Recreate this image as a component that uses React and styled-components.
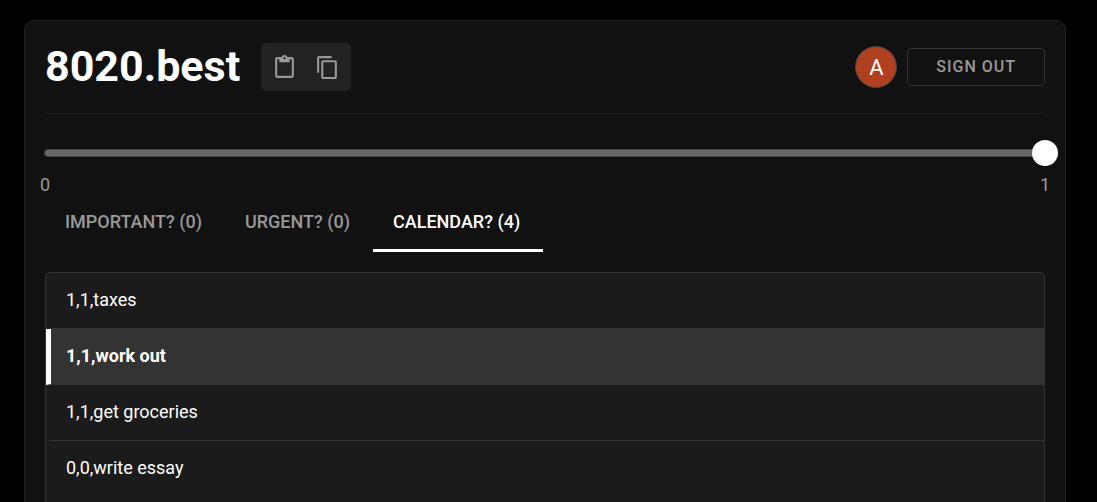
import React, { useState } from "react";
import styled, { createGlobalStyle } from "styled-components";
import { MdContentPaste, MdContentCopy } from "react-icons/md";

const GlobalStyle = createGlobalStyle`
  * { box-sizing: border-box; }
  html { background: #000; scrollbar-width: none; }
  body {
    margin: 0;
    color: #fff;
    font-family: Roboto, "Liberation Sans", sans-serif;
    font-size: 18px;
  }
  button { font-family: inherit; cursor: pointer; }
`;

const Page = styled.div`
  padding: 20px 31px 20px 24px;
`;

const Card = styled.main`
  padding: 20px;
  background: #111;
  border: 1px solid #222;
  border-radius: 10px;
`;

const Header = styled.header`
  display: flex;
  align-items: center;
  padding-bottom: 20px;
  border-bottom: 1px solid #222;
`;

const Title = styled.h1`
  margin: 0;
  padding-bottom: 2px;
  font-size: 43px;
  font-weight: 700;
  line-height: 50px;
`;

const IconGroup = styled.div`
  display: flex;
  margin-left: 21px;
  padding: 0 2px;
  background: #222;
  border-radius: 5px;
`;

const IconButton = styled.button`
  display: flex;
  align-items: center;
  justify-content: center;
  width: 43px;
  height: 48px;
  padding: 0;
  border: 0;
  background: none;
  color: #999;
  font-size: 25px;
`;

const Account = styled.div`
  display: flex;
  align-items: center;
  gap: 10px;
  margin-left: auto;
`;

const Avatar = styled.div`
  display: flex;
  align-items: center;
  justify-content: center;
  width: 42px;
  height: 42px;
  border: 1px solid #444;
  border-radius: 50%;
  background: #b14020;
  font-size: 22px;
`;

const SignOutButton = styled.button`
  height: 38px;
  padding: 0 28px 2px;
  border: 1px solid #333;
  border-radius: 5px;
  background: none;
  color: #999;
  font-size: 16px;
  font-weight: 500;
  letter-spacing: 1px;
`;

const SliderArea = styled.div`
  display: grid;
  align-items: center;
  margin-top: 26px;
  & > * { grid-area: 1 / 1; }
`;

const Rail = styled.div`
  height: 8px;
  margin: 0 -1px;
  border: 1px solid #444;
  border-radius: 4px;
  background: #666;
`;

const Range = styled.input`
  appearance: none;
  height: 26px;
  margin: 0 -13px;
  background: none;
  &::-webkit-slider-thumb {
    appearance: none;
    width: 26px;
    height: 26px;
    border-radius: 50%;
    background: #fff;
  }
`;

const Scale = styled.div`
  display: flex;
  justify-content: space-between;
  margin: 8px -5px 0;
  color: #999;
  line-height: 22px;
`;

const Tabs = styled.div`
  display: flex;
`;

const Tab = styled.button`
  padding: 14px 23px 15px 20px;
  border: 0;
  border-bottom: 3px solid ${(p) => (p.$active ? "#fff" : "transparent")};
  background: none;
  color: ${(p) => (p.$active ? "#fff" : "#999")};
  font-size: 18px;
  font-weight: 500;
  line-height: 24px;
`;

const List = styled.ul`
  min-height: 300px;
  margin: 20px 0 0;
  padding: 0;
  overflow: hidden;
  list-style: none;
  background: #1b1b1b;
  border: 1px solid #333;
  border-radius: 5px;
`;

const Row = styled.li`
  padding: 15px 20px 16px 15px;
  border-left: 5px solid ${(p) => (p.$selected ? "#fff" : "transparent")};
  border-bottom: 1px solid #333;
  background: ${(p) => (p.$selected ? "#333" : "none")};
  font-weight: ${(p) => (p.$selected ? 700 : 400)};
  line-height: 24px;
  &:last-child { border-bottom: 0; }
`;

const tabs = ["IMPORTANT? (0)", "URGENT? (0)", "CALENDAR? (4)"];
const items = ["1,1,taxes", "1,1,work out", "1,1,get groceries", "0,0,write essay"];

export default function App() {
  const [tab, setTab] = useState(2);
  const [selected, setSelected] = useState(1);
  const [value, setValue] = useState(1);

  return (
    <Page>
      <GlobalStyle />
      <Card>
        <Header>
          <Title>8020.best</Title>
          <IconGroup>
            <IconButton aria-label="Paste"><MdContentPaste /></IconButton>
            <IconButton aria-label="Copy"><MdContentCopy /></IconButton>
          </IconGroup>
          <Account>
            <Avatar>A</Avatar>
            <SignOutButton>SIGN OUT</SignOutButton>
          </Account>
        </Header>
        <SliderArea>
          <Rail />
          <Range
            type="range"
            aria-label="Value"
            min={0}
            max={1}
            value={value}
            onChange={(e) => setValue(Number(e.target.value))}
          />
        </SliderArea>
        <Scale>
          <span>0</span>
          <span>1</span>
        </Scale>
        <Tabs role="tablist">
          {tabs.map((label, i) => (
            <Tab key={label} role="tab" aria-selected={i === tab} $active={i === tab} onClick={() => setTab(i)}>
              {label}
            </Tab>
          ))}
        </Tabs>
        <List>
          {items.map((text, i) => (
            <Row key={text} $selected={i === selected} onClick={() => setSelected(i)}>
              {text}
            </Row>
          ))}
        </List>
      </Card>
    </Page>
  );
}
